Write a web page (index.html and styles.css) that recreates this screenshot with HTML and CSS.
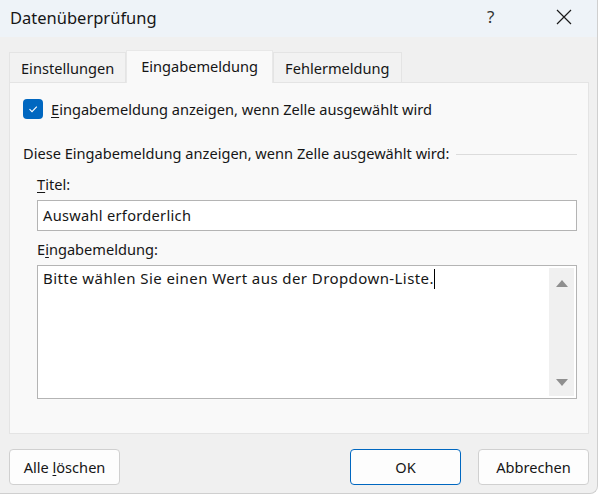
FILE: index.html
```html
<!DOCTYPE html>
<html lang="de">
<head>
  <meta charset="UTF-8">
  <title>Datenüberprüfung</title>
  <link rel="stylesheet" href="styles.css">
</head>
<body>
  <div class="dialog">
    <div class="titlebar">
      <span class="title">Datenüberprüfung</span>
      <span class="help">?</span>
      <span class="close">
        <svg width="16" height="16" viewBox="0 0 16 16"><path d="M1 1 L15 15 M15 1 L1 15" stroke="#1a1a1a" stroke-width="1.2" fill="none"/></svg>
      </span>
    </div>

    <div class="content">
      <div class="tabs">
        <div class="tab">Einstellungen</div>
        <div class="tab active">Eingabemeldung</div>
        <div class="tab">Fehlermeldung</div>
      </div>

      <div class="panel">
        <label class="check">
          <span class="box">
            <svg width="12" height="12" viewBox="0 0 12 12"><path d="M2.5 6.2 L5 8.6 L9.8 3.6" stroke="#fff" stroke-width="1.1" fill="none"/></svg>
          </span>
          <span><u>E</u>ingabemeldung anzeigen, wenn Zelle ausgewählt wird</span>
        </label>

        <div class="group-head">
          <span>Diese Eingabemeldung anzeigen, wenn Zelle ausgewählt wird:</span>
          <span class="rule"></span>
        </div>

        <div class="fields">
          <div class="field-label first"><u>T</u>itel:</div>
          <div class="input">Auswahl erforderlich</div>

          <div class="field-label">E<u>i</u>ngabemeldung:</div>
          <div class="textarea">
            <div class="ta-text">Bitte wählen Sie einen Wert aus der Dropdown-Liste.<span class="caret"></span></div>
            <div class="scroll">
              <span class="arrow up"></span>
              <span class="arrow down"></span>
            </div>
          </div>
        </div>
      </div>

      <div class="buttons">
        <button class="btn">Alle <u>l</u>öschen</button>
        <span class="spacer"></span>
        <button class="btn default">OK</button>
        <button class="btn">Abbrechen</button>
      </div>
    </div>
  </div>
</body>
</html>
```

FILE: styles.css
```css
body {
  margin: 0;
  background: #ffffff;
  font-family: "Noto Sans", "Open Sans", sans-serif;
  font-size: 14.6px;
  color: #161616;
}
u {
  text-decoration-thickness: 1px;
  text-underline-offset: 2px;
}
.dialog {
  width: 597px;
  height: 493px;
  background: #f0f0f0;
  border-right: 1px solid #cfcfcf;
  border-bottom: 1px solid #cfcfcf;
  border-radius: 0 0 8px 0;
  overflow: hidden;
}
.titlebar {
  height: 37px;
  display: flex;
  align-items: center;
  background: #eef3f8;
}
.title {
  flex: 1;
  padding-left: 10px;
  font-size: 16.5px;
  padding-bottom: 3px;
}
.help {
  width: 20px;
  font-size: 17px;
  color: #333;
  padding-bottom: 4px;
  margin-right: 49px;
}
.close {
  display: flex;
  margin-right: 25px;
  margin-bottom: 4px;
}
.content {
  padding: 12px 8px 0 9px;
}
.tabs {
  display: flex;
  align-items: flex-end;
  height: 33px;
}
.tab {
  height: 30px;
  padding: 0 11px;
  display: flex;
  align-items: center;
  background: #f2f2f2;
  border: 1px solid #e4e4e4;
  border-bottom: none;
  box-sizing: border-box;
}
.tab.active {
  height: 33px;
  padding: 0 14px 3px;
  background: #f9f9f9;
  border-color: #e8e8e8;
  position: relative;
  top: 1px;
  z-index: 1;
}
.panel {
  width: 580px;
  height: 352px;
  box-sizing: border-box;
  background: #f9f9f9;
  border: 1px solid #e4e4e4;
  padding: 16px 11px 0 13px;
}
.check {
  display: flex;
  align-items: center;
  gap: 8px;
}
.box {
  width: 20px;
  height: 20px;
  border-radius: 4px;
  background: #0067c0;
  display: flex;
  align-items: center;
  justify-content: center;
}
.group-head {
  display: flex;
  align-items: center;
  gap: 6px;
  margin-top: 24px;
}
.rule {
  flex: 1;
  height: 1px;
  background: #dcdcdc;
  margin-top: 3px;
}
.fields {
  padding-left: 14px;
}
.field-label {
  height: 22px;
  margin-top: 8px;
}
.field-label.first {
  margin-top: 11px;
}
.input {
  height: 31px;
  box-sizing: border-box;
  background: #fff;
  border: 1px solid #b4b4b4;
  padding: 4px 5px;
  letter-spacing: 0.3px;
  margin-top: 4px;
}
.textarea {
  height: 134px;
  box-sizing: border-box;
  background: #fff;
  border: 1px solid #b4b4b4;
  display: flex;
  padding: 2px 2px 2px 5px;
  margin-top: 4px;
}
.ta-text {
  flex: 1;
  font-size: 15px;
  letter-spacing: 0.42px;
}
.caret {
  display: inline-block;
  width: 1px;
  height: 20px;
  background: #000;
  vertical-align: -5px;
}
.scroll {
  width: 25px;
  background: #f0f0f0;
  display: flex;
  flex-direction: column;
  justify-content: space-between;
  align-items: center;
  padding: 12px 0 10px;
  box-sizing: border-box;
}
.arrow {
  width: 0;
  height: 0;
  border-left: 6px solid transparent;
  border-right: 6px solid transparent;
}
.arrow.up {
  border-bottom: 7px solid #8f8f8f;
}
.arrow.down {
  border-top: 7px solid #8f8f8f;
}
.buttons {
  display: flex;
  gap: 17px;
  margin-top: 15px;
  width: 580px;
}
.spacer {
  flex: 1;
}
.btn {
  width: 111px;
  height: 36px;
  font-family: inherit;
  font-size: 14.6px;
  color: #161616;
  background: #fdfdfd;
  border: 1px solid #d0d0d0;
  border-radius: 4px;
}
.btn.default {
  border-color: #0067c0;
}
```
